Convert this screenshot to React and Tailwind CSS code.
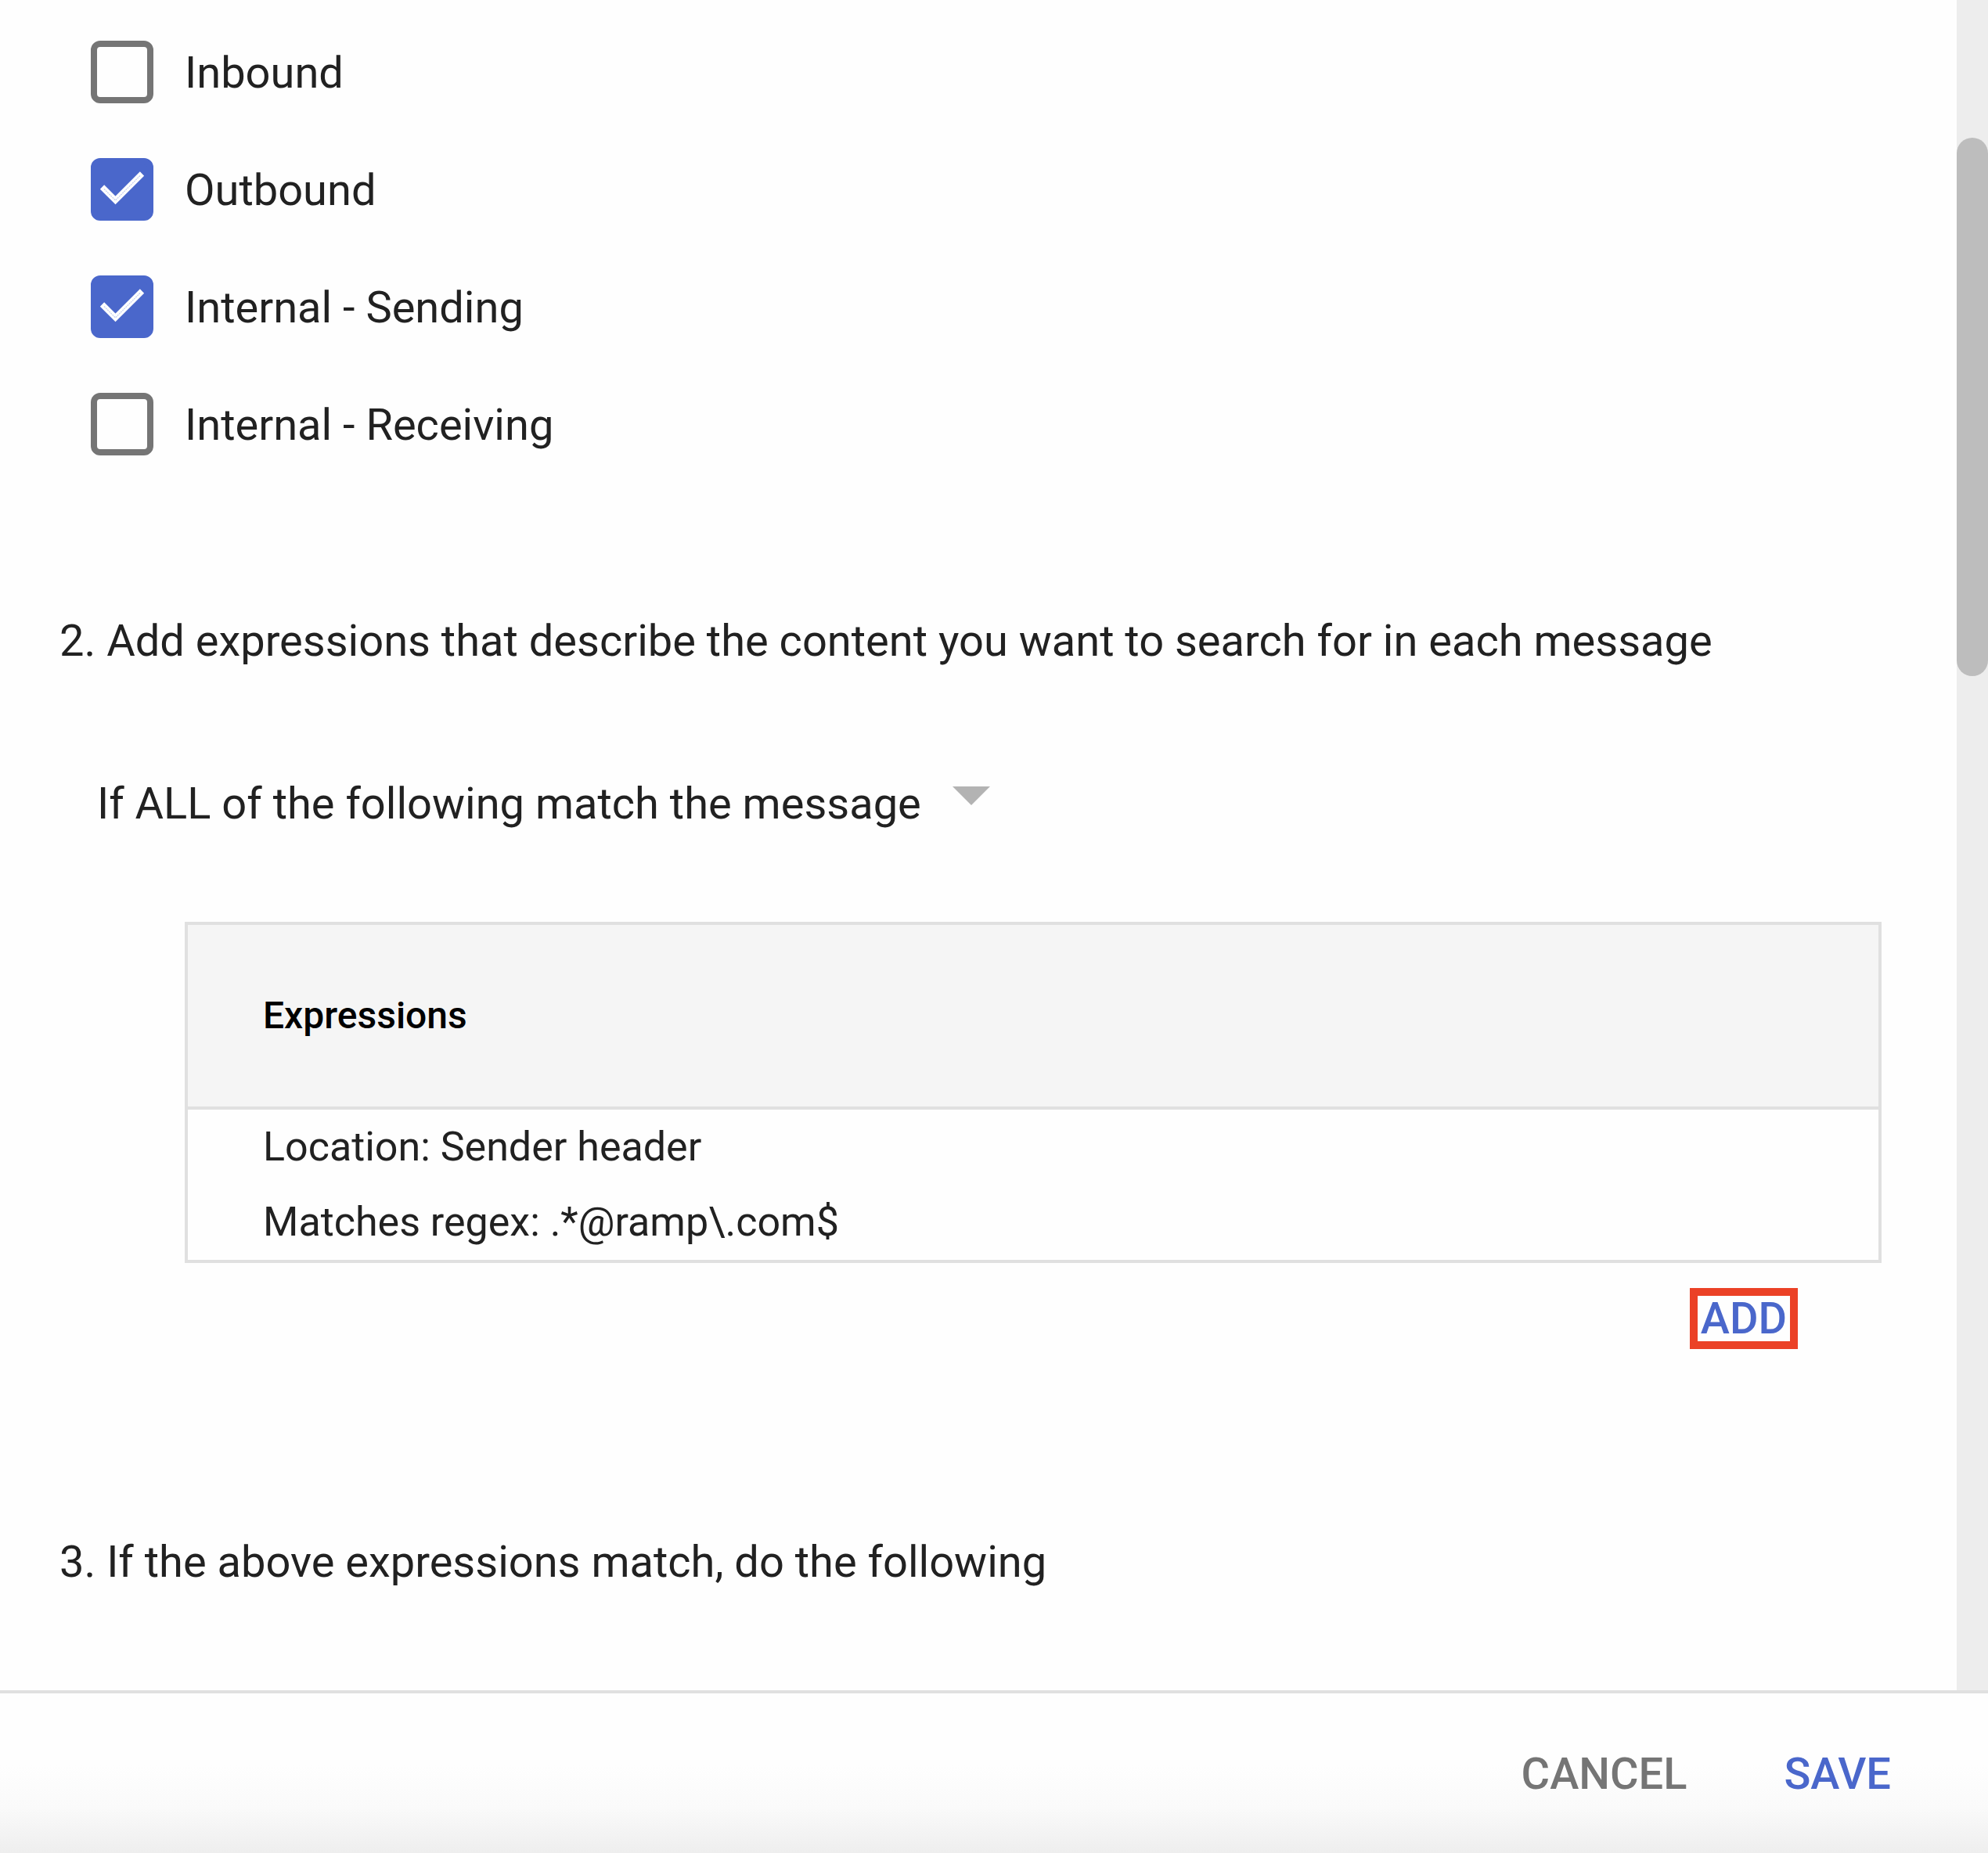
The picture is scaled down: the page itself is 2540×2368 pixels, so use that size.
import { useState } from "react";

const DIRECTIONS = [
  { id: "inbound", label: "Inbound", on: false },
  { id: "outbound", label: "Outbound", on: true },
  { id: "internal-sending", label: "Internal - Sending", on: true },
  { id: "internal-receiving", label: "Internal - Receiving", on: false },
];

function CheckRow({ id, label, on }) {
  const [checked, setChecked] = useState(on);
  return (
    <li className="flex items-center gap-10">
      <span className="grid size-20 shrink-0">
        <input
          id={id}
          type="checkbox"
          checked={checked}
          onChange={(e) => setChecked(e.target.checked)}
          className="col-start-1 row-start-1 size-20 appearance-none rounded-xl border-8 border-[#757575] checked:border-[#4a67cb] checked:bg-[#4a67cb]"
        />
        {checked && (
          <svg viewBox="0 0 80 80" className="pointer-events-none col-start-1 row-start-1 size-20" aria-hidden="true">
            <path d="M14.5 37 31.5 54 65.5 20" fill="none" stroke="#fff" strokeWidth="7.5" />
            <path d="M17 39.5 31.5 54 63 22.5" fill="none" stroke="#c3cdee" strokeWidth="1.2" strokeDasharray="2 1" />
          </svg>
        )}
      </span>
      <label htmlFor={id} className="pt-0.5 leading-16">{label}</label>
    </li>
  );
}

export default function App() {
  return (
    <div className="flex min-h-screen flex-col bg-[#fefefe] font-[Roboto,sans-serif] text-[56px] text-[#212121]">
      <div className="flex flex-1">
        <main className="flex-1 pt-13">
          <ul className="flex flex-col gap-[70px] pl-29">
            {DIRECTIONS.map((d) => (
              <CheckRow key={d.id} {...d} />
            ))}
          </ul>

          <section className="pt-[205px]">
            <h2 className="pl-19 leading-16">
              2. Add expressions that describe the content you want to search for in each message
            </h2>
            <div className="flex items-center pt-36 pl-31">
              <select
                aria-label="Match condition"
                className="field-sizing-content appearance-none bg-transparent leading-16"
              >
                <option>If ALL of the following match the message</option>
              </select>
              <svg viewBox="0 0 48 24" className="mb-5 ml-10 h-6 w-12" aria-hidden="true">
                <path d="M0 0H48L24 24Z" fill="#b3b3b3" />
              </svg>
            </div>

            <div className="pt-[119px] pr-24 pl-59">
              <table className="w-full border-4 border-[#e0e0e0] text-left text-[52px]">
                <thead className="border-b-4 border-[#e0e0e0] bg-[#f5f5f5]">
                  <tr>
                    <th scope="col" className="h-59 pl-24 text-[48px] font-medium text-black">Expressions</th>
                  </tr>
                </thead>
                <tbody>
                  <tr>
                    <td className="pl-24 leading-24">
                      <p>Location: Sender header</p>
                      <p>Matches regex: .*@ramp\.com$</p>
                    </td>
                  </tr>
                </tbody>
              </table>
            </div>
            <div className="flex justify-end pt-8 pr-[203px]">
              <button type="button" className="border-10 border-[#eb4126] px-1 leading-[58px] font-medium text-[#4a67cb]">
                ADD
              </button>
            </div>
          </section>

          <h2 className="pt-60 pb-12 pl-19 leading-16">3. If the above expressions match, do the following</h2>
        </main>

        <div className="w-10 bg-[#ededed] pt-44">
          <div className="h-172 rounded-full bg-[#bdbdbd]" />
        </div>
      </div>

      <footer className="flex h-52 items-center justify-end gap-31 border-t-4 border-[#e0e0e0] bg-linear-to-b from-[#fefefe] from-45% via-[#fafafa] via-72% to-[#eeeeee] pt-0.5 pr-31 font-medium">
        <button type="button" className="leading-16 text-[#757575]">CANCEL</button>
        <button type="button" className="leading-16 text-[#4a67cb]">SAVE</button>
      </footer>
    </div>
  );
}
